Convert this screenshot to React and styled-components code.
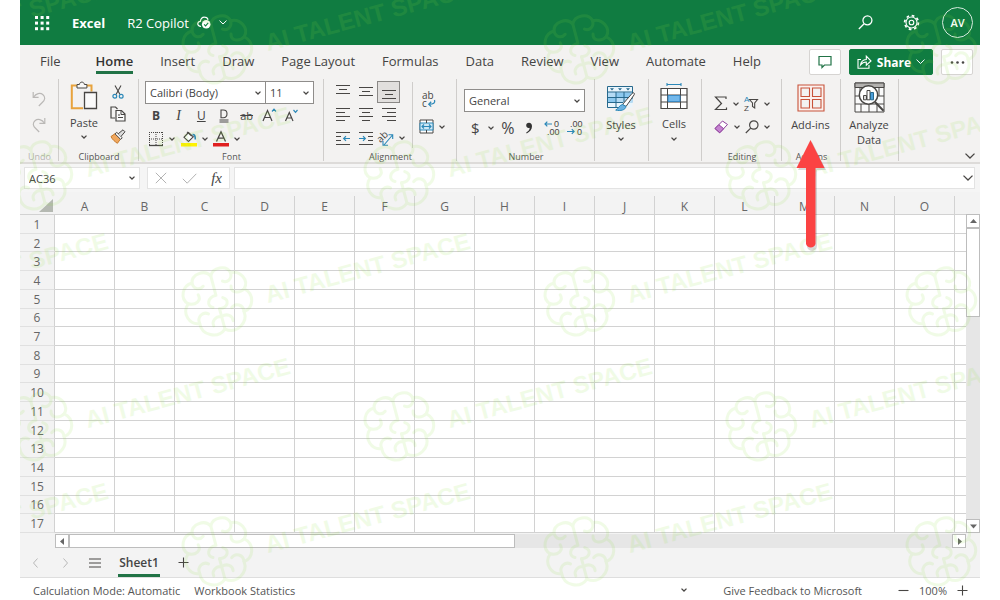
import React, { useState } from "react";
import styled, { createGlobalStyle } from "styled-components";

const GlobalStyle = createGlobalStyle`
  * {
    box-sizing: border-box;
  }

  body {
    margin: 0;
    background: #ffffff;
    font-family: "Open Sans", "Noto Sans", sans-serif;
    font-size: 11px;
    color: #444444;
  }

  button, input, select {
    font: inherit;
    color: inherit;
  }
`;

const Frame = styled.div`
  position: relative;
  height: 100vh;
  min-height: 560px;
  margin: 0 20px;
  display: flex;
  flex-direction: column;
  overflow: hidden;
  background: #f3f3f3;
`;

const PlainButton = styled.button`
  display: flex;
  align-items: center;
  justify-content: center;
  padding: 0;
  border: none;
  background: none;
  cursor: pointer;

  svg {
    flex: none;
    overflow: visible;
  }
`;

/* Title bar */

const TitleBar = styled.header`
  flex: none;
  height: 45px;
  padding: 0 7px 0 14px;
  display: flex;
  align-items: center;
  background: #107c41;
  color: #ffffff;
  font-size: 13px;
`;

const Brand = styled.span`
  margin: 0 22px;
  font-weight: 700;
`;

const FileButton = styled(PlainButton)`
  gap: 8px;
`;

const TitleActions = styled.div`
  margin-left: auto;
  display: flex;
  align-items: center;
  gap: 30px;
`;

const Avatar = styled(PlainButton)`
  width: 31px;
  height: 31px;
  margin-left: -8px;
  border: 1px solid #d5eadd;
  border-radius: 50%;
  font-size: 11px;
  font-weight: 600;
`;

/* Tabs */

const TabBar = styled.nav`
  flex: none;
  height: 31px;
  padding: 4px 7px 0 20px;
  display: flex;
  align-items: flex-start;
  background: #f3f2f1;
`;

const TabList = styled.div`
  flex: 1;
  display: flex;
  gap: 27px;
`;

const Tab = styled.button`
  height: 25px;
  padding: 3px 0 1px;
  border: none;
  border-bottom: 3px solid ${(props) => (props.$active ? "#217346" : "transparent")};
  background: none;
  font-size: 13px;
  line-height: 18px;
  font-weight: ${(props) => (props.$active ? 600 : 400)};
  color: ${(props) => (props.$active ? "#333333" : "#444444")};
  white-space: nowrap;
  cursor: pointer;

  &:first-child {
    margin-right: 8px;
  }
`;

const TabActions = styled.div`
  display: flex;
  gap: 8px;
`;

const ActionButton = styled(PlainButton)`
  width: 32px;
  height: 26px;
  border: 1px solid #d6d4d2;
  border-radius: 2px;
  background: #ffffff;
`;

const ShareButton = styled(ActionButton)`
  width: 84px;
  gap: 5px;
  border-color: #107c41;
  background: #107c41;
  color: #ffffff;
  font-size: 12px;
  font-weight: 700;
`;

/* Ribbon */

const Ribbon = styled.section`
  flex: none;
  height: 88px;
  display: flex;
  background: #f3f2f1;
  border-bottom: 2px solid #dddbd9;
`;

const Group = styled.div`
  position: relative;
  flex: none;
  width: ${(props) => props.$width}px;
  display: flex;
  flex-direction: column;

  &::after {
    content: "";
    position: absolute;
    top: 3px;
    right: 0;
    bottom: 1px;
    width: 1px;
    background: #cfcdcb;
  }
`;

const GroupBody = styled.div`
  flex: 1;
  display: flex;
  padding: ${(props) => props.$pad || "5px 8px 0"};
  gap: ${(props) => props.$gap || 0}px;
`;

const GroupLabel = styled.span`
  height: 10px;
  font-size: 9px;
  line-height: 10px;
  text-align: center;
  color: ${(props) => (props.$muted ? "#b5b3b1" : "#555555")};
`;

const Stack = styled.div`
  display: flex;
  flex-direction: column;
  align-items: ${(props) => props.$align || "center"};
  gap: ${(props) => props.$gap || 0}px;
  padding-top: ${(props) => props.$top || 0}px;
`;

const Row = styled.div`
  display: flex;
  align-items: center;
  justify-content: space-between;
  width: ${(props) => (props.$width ? `${props.$width}px` : "auto")};
  height: 23px;
  padding-left: ${(props) => props.$indent || 0}px;
`;

const BigButton = styled(PlainButton)`
  flex: 1;
  flex-direction: column;
  justify-content: flex-start;
  gap: ${(props) => props.$gap || 5}px;
  line-height: 15px;
`;

const ToolButton = styled(PlainButton)`
  min-width: ${(props) => props.$width || 22}px;
  height: 22px;
  gap: ${(props) => props.$gap || 5}px;
  border: 1px solid ${(props) => (props.$active ? "#8a8886" : "transparent")};
  background: ${(props) => (props.$active ? "#e1dfdd" : "none")};
`;

const SplitButton = styled(ToolButton)`
  justify-content: flex-start;
`;

const Letter = styled.span`
  font-size: ${(props) => props.$size || 12}px;
  line-height: 14px;
  font-weight: ${(props) => (props.$bold ? 700 : 400)};
  font-family: ${(props) => (props.$serif ? '"Liberation Serif", serif' : "inherit")};
  font-style: ${(props) => (props.$italic ? "italic" : "normal")};
  text-decoration: ${(props) => props.$line || "none"};
`;

const SelectBox = styled.label`
  position: relative;
  display: flex;
  width: ${(props) => props.$width}px;
  height: 23px;
  border: 1px solid #8f8d8b;
  background: #ffffff;

  & + & {
    margin-left: -1px;
  }

  select {
    width: 100%;
    padding: 0 16px 0 4px;
    border: none;
    outline: none;
    appearance: none;
    background: none;
  }

  svg {
    position: absolute;
    top: 9px;
    right: 4px;
    pointer-events: none;
  }
`;

const AlignGrid = styled.div`
  display: grid;
  grid-template-columns: repeat(3, 23px);
  grid-auto-rows: 23px;
`;

const InnerDivider = styled.span`
  width: 1px;
  height: 66px;
  margin: 1px 5px 0 12px;
  background: #cfcdcb;
`;

const RibbonEnd = styled.div`
  flex: 1;
  display: flex;
  align-items: flex-end;
  justify-content: flex-end;
  padding: 0 5px 3px 0;
`;

const Pointer = styled.svg`
  position: absolute;
  z-index: 3;
  top: 63px;
  left: 12px;
  pointer-events: none;
`;

/* Formula bar */

const FormulaBar = styled.div`
  flex: none;
  height: 28px;
  padding: 3px 5px 3px 4px;
  display: flex;
  gap: 7px;
  background: #f5f5f5;
`;

const FormulaPart = styled.div`
  display: flex;
  align-items: center;
  justify-content: space-between;
  width: ${(props) => (props.$width ? `${props.$width}px` : "auto")};
  flex: ${(props) => (props.$grow ? 1 : "none")};
  margin-left: ${(props) => (props.$grow ? "-3px" : 0)};
  padding: 0 ${(props) => props.$pad || 4}px;
  border: 1px solid #e3e3e3;
  background: #ffffff;

  input {
    flex: 1;
    min-width: 0;
    padding: 0;
    border: none;
    outline: none;
    background: none;
  }
`;

/* Sheet */

const SheetArea = styled.main`
  flex: 1;
  min-height: 0;
  display: grid;
  grid-template-columns: 1fr 14px;
  grid-template-rows: 1fr 15px;
  padding-top: 4px;
`;

const Sheet = styled.table`
  width: 100%;
  height: 100%;
  table-layout: fixed;
  border-collapse: separate;
  border-spacing: 0;
  color: #666666;
  font-size: 12px;
  line-height: 14px;

  th, td {
    padding: 0;
    border-right: 1px solid #d2d2d2;
    border-bottom: 1px solid #d2d2d2;
    font-weight: 400;
  }

  td {
    background: #ffffff;
  }

  th:last-child, td:last-child {
    border-right: none;
  }

  thead th {
    height: 19px;
    vertical-align: bottom;
    text-align: center;
  }

  thead th:first-child {
    border-right: none;
  }

  tbody th {
    padding-top: 2px;
    border-bottom-color: #e0e0e0;
  }
`;

const HeadCol = styled.col`
  width: 35px;
`;

const DataCol = styled.col`
  width: 60px;
`;

const Corner = styled.svg`
  display: block;
  margin: 0 2px 2px auto;
`;

const VerticalBar = styled.div`
  margin-top: 18px;
  display: flex;
  flex-direction: column;
  background: #e6e6e6;
`;

const HorizontalBar = styled.div`
  margin: 1px 0 0 35px;
  display: flex;
  background: #e6e6e6;
`;

const ScrollArrow = styled(PlainButton)`
  flex: none;
  width: 14px;
  height: 14px;
  border: 1px solid #bdbdbd;
  background: #ffffff;
`;

const Thumb = styled.span`
  flex: 0 0 ${(props) => props.$size};
  border: 1px solid #bdbdbd;
  background: #ffffff;
`;

const Track = styled.span`
  flex: 1;
`;

/* Bottom bars */

const SheetBar = styled.div`
  flex: none;
  height: 30px;
  display: flex;
  align-items: stretch;
  border-bottom: 1px solid #dedede;

  > button {
    width: 30px;
  }
`;

const SheetTab = styled(PlainButton)`
  && {
    width: 42px;
    margin: 0 8px;
  }
  padding-bottom: 1px;
  border-top: 3px solid transparent;
  border-bottom: 3px solid #217346;
  font-size: 12px;
  font-weight: 600;
`;

const StatusBar = styled.footer`
  flex: none;
  height: 22px;
  padding: 2px 12px 0 13px;
  display: flex;
  align-items: center;
  gap: 14px;
  background: #ffffff;
  color: #555555;
  white-space: nowrap;
`;

const StatusRight = styled.div`
  margin-left: auto;
  display: flex;
  align-items: center;
  gap: 36px;
`;

const Zoom = styled.div`
  display: flex;
  align-items: center;
  gap: 10px;
`;

const Watermark = styled.svg`
  position: absolute;
  inset: 0;
  width: 100%;
  height: 100%;
  pointer-events: none;
`;

const INK = "#484644";
const BLUE = "#2b88b8";

const Chevron = ({ size = 6, color = INK, width = 1.3 }) => (
  <svg width={size} height={size / 2 + 1} viewBox={`0 0 ${size} ${size / 2 + 1}`} fill="none" aria-hidden="true">
    <path d={`M.5 .6 L${size / 2} ${size / 2} L${size - 0.5} .6`} stroke={color} strokeWidth={width} />
  </svg>
);

const Icon = ({ w, h, children }) => (
  <svg width={w} height={h} viewBox={`0 0 ${w} ${h}`} fill="none" stroke={INK} strokeWidth="1" aria-hidden="true">
    {children}
  </svg>
);

const WaffleIcon = () => (
  <Icon w={16} h={16}>
    <g fill="#ffffff" stroke="none">
      {[1, 6.6, 12.2].map((y) =>
        [1, 6.6, 12.2].map((x) => <rect key={`${x}-${y}`} x={x} y={y} width="3" height="3" />)
      )}
    </g>
  </Icon>
);

const CloudIcon = () => (
  <Icon w={14} h={13}>
    <path d="M4 10.5C1.8 10.3.6 9 .8 7.4 1 6 2.2 5.2 3.3 5.3 3.8 2.6 5.4 1 7.6 1.1c1.8 0 3 1 3.5 2.6" stroke="#ffffff" strokeWidth="1.2" />
    <circle cx="9.2" cy="8.3" r="4.3" fill="#ffffff" stroke="none" />
    <path d="M7.1 8.4l1.5 1.5 2.6-3" stroke="#107c41" strokeWidth="1.1" />
  </Icon>
);

const SearchIcon = ({ size = 14, color = INK }) => (
  <svg width={size} height={size} viewBox="0 0 14 14" fill="none" stroke={color} strokeWidth="1.2" aria-hidden="true">
    <circle cx="8.8" cy="5" r="4.2" />
    <path d="M5.7 8.1L.8 13" />
  </svg>
);

const GearIcon = () => (
  <svg width="17" height="17" viewBox="0 0 17 17" fill="none" stroke="#ffffff" strokeWidth="1.1" aria-hidden="true">
    <circle cx="8.5" cy="8.5" r="5.5" />
    <circle cx="8.5" cy="8.5" r="2.3" />
    <circle cx="8.5" cy="8.5" r="6.9" strokeWidth="1.7" strokeDasharray="2.7 2.72" />
  </svg>
);

const CommentIcon = () => (
  <Icon w={14} h={14}>
    <path d="M1 1.5h12v8.5H6.5L4 12.5V10H1z" stroke="#217346" strokeWidth="1.2" />
  </Icon>
);

const ShareIcon = () => (
  <Icon w={15} h={14}>
    <g stroke="#ffffff" strokeWidth="1.1">
      <path d="M4 4.5H1v8.7h11V10" />
      <path d="M3.5 10C4 6.4 6 4.8 9.3 4.5V1.2L14 6 9.3 10.2V7C6.7 7 5 8 3.5 10z" />
    </g>
  </Icon>
);

const MoreIcon = () => (
  <Icon w={15} h={3}>
    <g fill="#484644" stroke="none">
      <circle cx="2" cy="1.5" r="1.3" />
      <circle cx="7.5" cy="1.5" r="1.3" />
      <circle cx="13" cy="1.5" r="1.3" />
    </g>
  </Icon>
);

const UndoIcon = ({ redo }) => (
  <Icon w={14} h={16}>
    <g transform={redo ? "translate(14 0) scale(-1 1)" : undefined} stroke="#bab8b6" strokeWidth="1.2">
      <path d="M1.2 1v5.4h5.4" />
      <path d="M1.5 6.2C4 2.3 8.3 1.4 11 3.7c2.7 2.4 2 5.3-.5 7.6L6.8 15" />
    </g>
  </Icon>
);

const PasteIcon = () => (
  <Icon w={28} h={29}>
    <path d="M7 4.5H1.8v22.7H13M16.5 4.5h5v6" stroke="#e8a33d" strokeWidth="2" />
    <path d="M7 7V3.500h2.400C9.800.3 14 .3 14.400 3.500h2.500V7z" fill="#f8f8f8" />
    <path d="M14.500 11.500h12v16h-12z" fill="#fafafa" strokeWidth="1.3" />
  </Icon>
);

const CutIcon = () => (
  <Icon w={12} h={14}>
    <path d="M3 .5l5 9M9 .5l-5 9" strokeWidth="1.1" />
    <circle cx="2.8" cy="11.2" r="1.9" stroke={BLUE} strokeWidth="1.2" />
    <circle cx="9.2" cy="11.2" r="1.9" stroke={BLUE} strokeWidth="1.2" />
  </Icon>
);

const CopyIcon = () => (
  <Icon w={16} h={16}>
    <path d="M5 12H1V1h4.5l2 2" strokeWidth="1.2" />
    <path d="M6 4.5h5.5L15 8v7H6z" fill="#fafafa" strokeWidth="1.2" />
    <path d="M11 4.5V8.5h4M8 9h2M8 11.5h5" />
  </Icon>
);

const PainterIcon = () => (
  <Icon w={16} h={15}>
    <path d="M1 7.5l4-2.8 5.4 5.4-3 4.2C5 12.5 2.5 11 1 7.5z" fill="#f0a75e" stroke="#c77a2b" />
    <path d="M5 4.8l1.8-1.4 5.4 5.2-1.5 1.8z" fill="#ffffff" />
    <path d="M8.2 4.8L13 .8l2 2-4 4.6" fill="#dddddd" />
  </Icon>
);

const BordersIcon = () => (
  <Icon w={16} h={16}>
    <path d="M1.5 1v14M14.5 1v14M8 1v14M1 1.5h14M1 8h14" strokeDasharray="1 1" />
    <path d="M1 14.5h14" strokeWidth="1.3" />
  </Icon>
);

const FillIcon = () => (
  <Icon w={16} h={16}>
    <path d="M7.5 1.5L3 6.3l4.5 4.2 4.8-4.7zM6 .8l4.6 4.3" fill="#ffffff" strokeWidth="1.1" />
    <path d="M11.5 3.5c2-.2 2.8 1.2 2.8 5" stroke={BLUE} strokeWidth="1.6" />
    <path d="M0 12h16v3.5H0z" fill="#fff200" stroke="none" />
  </Icon>
);

const FontColorIcon = () => (
  <Icon w={16} h={16}>
    <path d="M3.5 10.5L8 .8l4.5 9.7M5 7.2h6" strokeWidth="1.3" />
    <path d="M0 12h16v3.5H0z" fill="#e02020" stroke="none" />
  </Icon>
);

const ResizeIcon = ({ grow }) => (
  <Icon w={15} h={15}>
    {grow ? (
      <path d="M1 13L5.5 2.5 10 13M2.5 9.5h6" strokeWidth="1.2" />
    ) : (
      <path d="M1.5 13l3.8-8.500L9 13M2.800 10h5" strokeWidth="1.2" />
    )}
    <path d={grow ? "M10 3.5L12 1.2l2 2.3" : "M9.5 2l2 2.3 2-2.3"} stroke={BLUE} strokeWidth="1.2" />
  </Icon>
);

const DoubleUnderlineIcon = () => (
  <Icon w={10} h={14}>
    <path d="M2 1h2.3C7 1 8 2.8 8 4.8S7 8.7 4.3 8.7H2zM.5 11h9M.5 13h9" strokeWidth="1.1" />
  </Icon>
);

// each entry is [x start, x end] of one line
const LINE_SETS = {
  center: [[0, 14], [3, 11], [0, 14]],
  left4: [[0, 14], [0, 9], [0, 14], [0, 9]],
  center4: [[0, 14], [3, 11], [0, 14], [3, 11]],
  right4: [[0, 14], [5, 14], [0, 14], [5, 14]],
};

const LinesIcon = ({ kind, top = 0 }) => (
  <Icon w={14} h={16}>
    {LINE_SETS[kind].map(([from, to], i) => (
      <path key={i} d={`M${from} ${top + 1.5 + i * 4}H${to}`} />
    ))}
  </Icon>
);

const IndentIcon = ({ increase }) => (
  <Icon w={14} h={14}>
    <path d={increase ? "M0 1.5h14M9 5.5h5M9 9.5h5M0 13.5h14" : "M0 1.5h14M0 5.5h5M0 9.5h5M0 13.5h14"} />
    <path d={increase ? "M0 7.5h6M4 5.2l2.3 2.3L4 9.8" : "M14 7.5H8M10 5.2L7.7 7.5 10 9.8"} stroke={BLUE} strokeWidth="1.2" />
  </Icon>
);

const OrientationIcon = () => (
  <Icon w={16} h={16}>
    <text x="0" y="11" fontSize="10" fill={INK} stroke="none" transform="rotate(-45 4 9)">
      ab
    </text>
    <path d="M6 15L14.5 5M10.5 4.8h4.2V9M5 11v4.3h5" stroke={BLUE} strokeWidth="1.1" />
  </Icon>
);

const WrapIcon = () => (
  <Icon w={16} h={16}>
    <g fill={INK} stroke="none" fontSize="10">
      <text x="1" y="7">
        ab
      </text>
      <text x="1" y="15">
        c
      </text>
    </g>
    <path d="M13.5 8c1 3-1 4.2-5.5 4.2M10.2 9.8L7.8 12.2l2.4 2.4" stroke={BLUE} strokeWidth="1.3" />
  </Icon>
);

const MergeIcon = () => (
  <Icon w={15} h={15}>
    <path d="M1 1h13v13H1z" fill="#ffffff" />
    <path d="M1 4h13v7H1z" fill="#cfe8f5" stroke={BLUE} />
    <path d="M7.5 1v3M7.5 11v3" />
    <path d="M3 7.5h9M5 5.5l-2 2 2 2M10 5.5l2 2-2 2" stroke={BLUE} strokeWidth="1.1" />
  </Icon>
);

const DecimalIcon = ({ decrease }) => (
  <Icon w={16} h={16}>
    <g fill={INK} stroke="none" fontSize="9" fontFamily="Liberation Sans">
      <text x={decrease ? 3 : 10} y="7">
        {decrease ? ".00" : "0"}
      </text>
      <text x={decrease ? 10 : 3} y="15">
        {decrease ? "0" : ".00"}
      </text>
    </g>
    <path d={decrease ? "M0 11.5h7M4.8 9.2l2.3 2.3-2.3 2.3" : "M8 4H1M3.3 1.7L1 4l2.3 2.3"} stroke={BLUE} strokeWidth="1.2" />
  </Icon>
);

const StylesIcon = () => (
  <Icon w={30} h={27}>
    <path d="M1.5 1.5h25v21h-25z" fill="#eaf5fc" stroke="none" />
    <path d="M1.5 7.5h25v10h-25z" fill="#8cc8ee" stroke="none" />
    <path d="M10 12.5h17v5H10zM1.5 7.5H10v5H1.5z" fill="#b5dbf4" stroke="none" />
    <path d="M18 22.5H1.5v-21h25v12M1.5 7h25M1.5 12.5h22M1.5 17.5H17M10 7v15.5M18 7v10" stroke="#27698d" />
    <path d="M4 3.2h4L6 5.4zM12 3.2h4l-2 2.2zM20 3.2h4l-2 2.2z" fill="#27698d" stroke="none" />
    <path d="M16.5 19.5L26.2 8.3c1.3-1.2 2.8-.2 2 1.4L20 21.5z" fill="#ffffff" />
    <path d="M20 21.5c-.6 3.6-5.5 4.7-10.3 3.6 3-1 3-4.8 6.8-5.6z" fill="#6bb2e2" stroke={BLUE} />
  </Icon>
);

const CellsIcon = () => (
  <Icon w={28} h={27}>
    <path d="M7 1.5h14M7 0v3M21 0v3" stroke={BLUE} strokeWidth="1.1" />
    <path d="M1 5.5h26v20H1z" fill="#ffffff" strokeWidth="1.2" />
    <path d="M1 12h26M1 19h26M7.5 5.5v20M20.5 5.5v20" />
    <path d="M8 12.5h12v6H8z" fill="#72b8ec" stroke="#3b8ac4" />
  </Icon>
);

const SumIcon = () => (
  <Icon w={14} h={15}>
    <path d="M12 3V1H1.5l6 6.5-6 6H12.5V11.5" strokeWidth="1.2" />
  </Icon>
);

const SortIcon = () => (
  <Icon w={15} h={15}>
    <g stroke="none" fontSize="8" fontFamily="Liberation Sans">
      <text x="0" y="6" fill={BLUE}>
        A
      </text>
      <text x="0" y="15" fill={INK}>
        Z
      </text>
    </g>
    <path d="M5.5 3.5h8L10.7 7v5L8.5 10.5V7z" strokeWidth="1.1" />
  </Icon>
);

const EraserIcon = () => (
  <Icon w={15} h={14}>
    <path d="M1 8.5L8.5 1l5 3.5-7.8 8.3z" fill="#ffffff" stroke="#8e3f9c" />
    <path d="M1 8.5l3.8-3.8 4.9 4-4 4.1z" fill="#c583d0" stroke="#8e3f9c" />
  </Icon>
);

const AddinsIcon = () => (
  <Icon w={28} h={28}>
    <g stroke="#c8533a" strokeWidth="1.1">
      <path d="M1 1h26v26H1z" fill="#fbf1ee" />
      <path d="M4 4h8.500v8.500H4zM15.500 4H24v8.500h-8.500zM4 15.500h8.500V24H4zM15.500 15.500H24V24h-8.500z" fill="#f3f2f1" />
    </g>
  </Icon>
);

const AnalyzeIcon = () => (
  <Icon w={31} h={31}>
    <path d="M1 1h29v29H1z" fill="#fafafa" />
    <path d="M1 1h29v4.5H1z" fill="#b3b1af" />
    <path d="M1 14h29M1 22h29M7 22v8M15 22v8M23 22v8M6 5.5V14M25 5.5V14" />
    <circle cx="14.5" cy="13" r="9.2" fill="#ffffff" strokeWidth="1.5" />
    <path d="M21 20l8.5 8.8" strokeWidth="2" />
    <path d="M9.5 13.5h3v4.3h-3z" fill="#d9d9d9" />
    <path d="M13 8.5h3v9.3h-3z" fill="#ffffff" />
    <path d="M16.5 10.5h3v7.3h-3z" fill="#4b9edb" stroke="#27698d" />
  </Icon>
);

const CancelIcon = () => (
  <Icon w={12} h={12}>
    <path d="M.8.8l10.4 10.4M11.2.8L.8 11.2" stroke="#b3b3b3" />
  </Icon>
);

const AcceptIcon = () => (
  <Icon w={15} h={11}>
    <path d="M.8 5.8l4.4 4.4L14.3.8" stroke="#b3b3b3" />
  </Icon>
);

const AngleIcon = ({ flip }) => (
  <Icon w={7} h={12}>
    <path d={flip ? "M1.5 1.5L5.5 6l-4 4.5" : "M5.5 1.5L1.5 6l4 4.5"} stroke="#b8b8b8" />
  </Icon>
);

const MenuIcon = () => (
  <Icon w={12} h={10}>
    <path d="M0 1h12M0 5h12M0 9h12" strokeWidth="1.2" />
  </Icon>
);

const PlusIcon = ({ minus }) => (
  <Icon w={11} h={11}>
    <path d={minus ? "M.5 5.5h10" : "M.5 5.5h10M5.5.5v10"} strokeWidth="1.1" />
  </Icon>
);

const TRIANGLES = {
  up: "M0 5l3.5-4L7 5z",
  down: "M0 1.5l3.5 4 3.5-4z",
  left: "M5 0L1 3.5 5 7z",
  right: "M2 0l4 3.5L2 7z",
};

const Triangle = ({ dir }) => (
  <svg width="7" height="7" viewBox="0 0 7 7" fill="#666666" aria-hidden="true">
    <path d={TRIANGLES[dir]} />
  </svg>
);

const SplitTool = ({ label, gap, children }) => (
  <SplitButton aria-label={label} $gap={gap}>
    {children}
    <Chevron />
  </SplitButton>
);

const TABS = [
  "File", "Home", "Insert", "Draw", "Page Layout", "Formulas",
  "Data", "Review", "View", "Automate", "Help",
];

const COLUMNS = "ABCDEFGHIJKLMNO".split("");
const ROWS = Array.from({ length: 17 }, (_, i) => i + 1);

const MARK_ROWS = [51, 177, 303, 428, 553, 679];

const Mark = ({ x, y }) => (
  <g transform={`translate(${x} ${y}) rotate(-15)`}>
    <g fill="none" stroke="#8de03c" strokeWidth="3" strokeLinecap="round">
      <path d="M0-28C-4-36-18-35-20-26-30-26-36-14-29-7-38 1-33 14-23 15-24 27-10 35 0 27 10 35 24 27 23 15 33 14 38 1 29-7 36-14 30-26 20-26 18-35 4-36 0-28z" />
      <path d="M0-28V-8M0 6V27M-20-26C-20-19-14-17-10-20M-29-7C-22-3-15-7-17-13M-23 15C-24 8-17 4-12 8M0-8C-9-8-12 0-6 3M0 14C-6 12-11 16-10 21" />
      <path d="M20-26C20-19 14-17 10-20M29-7C22-3 15-7 17-13M23 15C24 8 17 4 12 8M0 6C9 7 12 0 6-4M0 14C6 12 11 16 10 21" />
    </g>
    <text x="48" y="13" fontSize="24" fontWeight="700" fontFamily="Liberation Sans, sans-serif" fill="#8de03c">
      AI TALENT SPACE
    </text>
  </g>
);

const App = () => {
  const [activeTab, setActiveTab] = useState("Home");
  const [formula, setFormula] = useState("");
  const [cellName, setCellName] = useState("AC36");

  return (
    <Frame>
      <GlobalStyle />

      <TitleBar>
        <PlainButton aria-label="App launcher">
          <WaffleIcon />
        </PlainButton>
        <Brand>Excel</Brand>
        <FileButton>
          R2 Copilot
          <CloudIcon />
          <Chevron size={8} color="#ffffff" width={1} />
        </FileButton>
        <TitleActions>
          <PlainButton aria-label="Search">
            <SearchIcon size={15} color="#ffffff" />
          </PlainButton>
          <PlainButton aria-label="Settings">
            <GearIcon />
          </PlainButton>
          <Avatar>AV</Avatar>
        </TitleActions>
      </TitleBar>

      <TabBar>
        <TabList>
          {TABS.map((tab) => (
            <Tab key={tab} $active={tab === activeTab} onClick={() => setActiveTab(tab)}>
              {tab}
            </Tab>
          ))}
        </TabList>
        <TabActions>
          <ActionButton aria-label="Comments">
            <CommentIcon />
          </ActionButton>
          <ShareButton>
            <ShareIcon />
            Share
            <Chevron size={9} color="#ffffff" width={1} />
          </ShareButton>
          <ActionButton aria-label="More options">
            <MoreIcon />
          </ActionButton>
        </TabActions>
      </TabBar>

      <Ribbon>
        <Group $width={39}>
          <GroupBody $pad="12px 8px 0">
            <Stack $gap={4}>
              <ToolButton aria-label="Undo">
                <UndoIcon />
              </ToolButton>
              <ToolButton aria-label="Redo">
                <UndoIcon redo />
              </ToolButton>
            </Stack>
          </GroupBody>
          <GroupLabel $muted>Undo</GroupLabel>
        </Group>

        <Group $width={80}>
          <GroupBody $pad="5px 10px 0 8px" $gap={6}>
            <BigButton>
              <PasteIcon />
              Paste
              <Chevron />
            </BigButton>
            <Stack>
              <ToolButton aria-label="Cut">
                <CutIcon />
              </ToolButton>
              <ToolButton aria-label="Copy">
                <CopyIcon />
              </ToolButton>
              <ToolButton aria-label="Format Painter">
                <PainterIcon />
              </ToolButton>
            </Stack>
          </GroupBody>
          <GroupLabel>Clipboard</GroupLabel>
        </Group>

        <Group $width={185}>
          <GroupBody $pad="5px 6px 0">
            <Stack $align="flex-start">
              <Row>
                <SelectBox $width={121}>
                  <select aria-label="Font name">
                    <option>Calibri (Body)</option>
                  </select>
                  <Chevron />
                </SelectBox>
                <SelectBox $width={49}>
                  <select aria-label="Font size">
                    <option>11</option>
                  </select>
                  <Chevron />
                </SelectBox>
              </Row>
              <Row $width={158}>
                <ToolButton aria-label="Bold">
                  <Letter $bold>B</Letter>
                </ToolButton>
                <ToolButton aria-label="Italic">
                  <Letter $serif $italic $size={14}>I</Letter>
                </ToolButton>
                <ToolButton aria-label="Underline">
                  <Letter $line="underline">U</Letter>
                </ToolButton>
                <ToolButton aria-label="Double underline">
                  <DoubleUnderlineIcon />
                </ToolButton>
                <ToolButton aria-label="Strikethrough">
                  <Letter $size={11} $line="line-through">ab</Letter>
                </ToolButton>
                <ToolButton aria-label="Increase font size">
                  <ResizeIcon grow />
                </ToolButton>
                <ToolButton aria-label="Decrease font size">
                  <ResizeIcon />
                </ToolButton>
              </Row>
              <Row $width={96} $indent={2}>
                <SplitTool label="Borders">
                  <BordersIcon />
                </SplitTool>
                <SplitTool label="Fill color">
                  <FillIcon />
                </SplitTool>
                <SplitTool label="Font color">
                  <FontColorIcon />
                </SplitTool>
              </Row>
            </Stack>
          </GroupBody>
          <GroupLabel>Font</GroupLabel>
        </Group>

        <Group $width={133}>
          <GroupBody $pad="5px 0 0 7px">
            <AlignGrid>
              <ToolButton aria-label="Top align">
                <LinesIcon kind="center" />
              </ToolButton>
              <ToolButton aria-label="Middle align">
                <LinesIcon kind="center" top={2} />
              </ToolButton>
              <ToolButton aria-label="Bottom align" $active>
                <LinesIcon kind="center" top={5} />
              </ToolButton>
              <ToolButton aria-label="Align left">
                <LinesIcon kind="left4" />
              </ToolButton>
              <ToolButton aria-label="Center">
                <LinesIcon kind="center4" />
              </ToolButton>
              <ToolButton aria-label="Align right">
                <LinesIcon kind="right4" />
              </ToolButton>
              <ToolButton aria-label="Decrease indent">
                <IndentIcon />
              </ToolButton>
              <ToolButton aria-label="Increase indent">
                <IndentIcon increase />
              </ToolButton>
              <SplitTool label="Orientation">
                <OrientationIcon />
              </SplitTool>
            </AlignGrid>
            <InnerDivider />
            <Stack $top={7} $gap={4} $align="flex-start">
              <Row>
                <ToolButton aria-label="Wrap text">
                  <WrapIcon />
                </ToolButton>
              </Row>
              <Row>
                <SplitTool label="Merge cells">
                  <MergeIcon />
                </SplitTool>
              </Row>
            </Stack>
          </GroupBody>
          <GroupLabel>Alignment</GroupLabel>
        </Group>

        <Group $width={138}>
          <GroupBody $pad="13px 7px 0">
            <Stack $gap={4} $align="flex-start">
              <SelectBox $width={121}>
                <select aria-label="Number format">
                  <option>General</option>
                </select>
                <Chevron />
              </SelectBox>
              <Row $width={120} $indent={6}>
                <SplitTool label="Currency" gap={8}>
                  <Letter $size={15}>$</Letter>
                </SplitTool>
                <ToolButton aria-label="Percent" $width={16}>
                  <Letter $size={16}>%</Letter>
                </ToolButton>
                <ToolButton aria-label="Comma style" $width={16}>
                  <Icon w={8} h={12}>
                    <path d="M4 .8a2.8 2.8 0 0 0-2.8 2.8C1.2 5.2 2.4 6 3.6 6c.6 0 .9-.1 1.1-.2C4.6 7.8 3.4 9.5 1.2 10.6l.5.8C4.9 10 7 7.5 7 4.3 7 2 5.8.8 4 .8z" fill="#333333" stroke="none" />
                  </Icon>
                </ToolButton>
                <ToolButton aria-label="Increase decimal" $width={18}>
                  <DecimalIcon />
                </ToolButton>
                <ToolButton aria-label="Decrease decimal" $width={18}>
                  <DecimalIcon decrease />
                </ToolButton>
              </Row>
            </Stack>
          </GroupBody>
          <GroupLabel>Number</GroupLabel>
        </Group>

        <Group $width={54}>
          <GroupBody $pad="9px 5px 0 3px">
            <BigButton>
              <StylesIcon />
              Styles
              <Chevron />
            </BigButton>
          </GroupBody>
        </Group>

        <Group $width={53}>
          <GroupBody $pad="7px 6px 0 3px">
            <BigButton $gap={6}>
              <CellsIcon />
              Cells
              <Chevron />
            </BigButton>
          </GroupBody>
        </Group>

        <Group $width={80}>
          <GroupBody $pad="16px 8px 0 11px">
            <Stack $align="flex-start">
              <Row $width={58}>
                <SplitTool label="AutoSum">
                  <SumIcon />
                </SplitTool>
                <SplitTool label="Sort and filter">
                  <SortIcon />
                </SplitTool>
              </Row>
              <Row $width={58}>
                <SplitTool label="Clear">
                  <EraserIcon />
                </SplitTool>
                <SplitTool label="Find">
                  <SearchIcon />
                </SplitTool>
              </Row>
            </Stack>
          </GroupBody>
          <GroupLabel>Editing</GroupLabel>
        </Group>

        <Group $width={59}>
          <GroupBody $pad="8px 5px 0 3px">
            <BigButton>
              <AddinsIcon />
              Add-ins
            </BigButton>
          </GroupBody>
          <GroupLabel>Add-ins</GroupLabel>
          <Pointer width="34" height="116" viewBox="0 0 34 116" aria-hidden="true">
            <path d="M18 3l14 28h-9v76a5 5 0 0 1-10 0V31H4z" fill="#000000" opacity="0.15" />
            <path d="M16.5 1l14 28h-9v76a5 5 0 0 1-9.5 0V29H2.5z" fill="#fb4343" />
          </Pointer>
        </Group>

        <Group $width={58}>
          <GroupBody $pad="6px 5px 0 3px">
            <BigButton $gap={4}>
              <AnalyzeIcon />
              <span>
                Analyze
                <br />
                Data
              </span>
            </BigButton>
          </GroupBody>
        </Group>

        <RibbonEnd>
          <PlainButton aria-label="Collapse ribbon">
            <Chevron size={10} />
          </PlainButton>
        </RibbonEnd>
      </Ribbon>

      <FormulaBar>
        <FormulaPart $width={116}>
          <input aria-label="Name box" value={cellName} onChange={(e) => setCellName(e.target.value)} />
          <Chevron />
        </FormulaPart>
        <FormulaPart $width={83} $pad={7}>
          <PlainButton aria-label="Cancel">
            <CancelIcon />
          </PlainButton>
          <PlainButton aria-label="Enter">
            <AcceptIcon />
          </PlainButton>
          <PlainButton aria-label="Insert function">
            <Letter $serif $italic $size={15}>fx</Letter>
          </PlainButton>
        </FormulaPart>
        <FormulaPart $grow $pad={1}>
          <input aria-label="Formula" value={formula} onChange={(e) => setFormula(e.target.value)} />
          <PlainButton aria-label="Expand formula bar">
            <Chevron size={10} />
          </PlainButton>
        </FormulaPart>
      </FormulaBar>

      <SheetArea>
        <Sheet>
          <colgroup>
            <HeadCol />
            {COLUMNS.map((name) => (
              <DataCol key={name} />
            ))}
            <col />
          </colgroup>
          <thead>
            <tr>
              <th aria-label="Select all">
                <Corner width="14" height="13" viewBox="0 0 14 13">
                  <path d="M14 0v13H0z" fill="#b5b9b2" />
                </Corner>
              </th>
              {COLUMNS.map((name) => (
                <th key={name} scope="col">
                  {name}
                </th>
              ))}
              <th />
            </tr>
          </thead>
          <tbody>
            {ROWS.map((row) => (
              <tr key={row}>
                <th scope="row">{row}</th>
                {COLUMNS.map((name) => (
                  <td key={name} />
                ))}
                <td />
              </tr>
            ))}
          </tbody>
        </Sheet>
        <VerticalBar>
          <ScrollArrow aria-label="Scroll up">
            <Triangle dir="up" />
          </ScrollArrow>
          <Thumb $size="28%" />
          <Track />
          <ScrollArrow aria-label="Scroll down">
            <Triangle dir="down" />
          </ScrollArrow>
        </VerticalBar>
        <HorizontalBar>
          <ScrollArrow aria-label="Scroll left">
            <Triangle dir="left" />
          </ScrollArrow>
          <Thumb $size="49%" />
          <Track />
          <ScrollArrow aria-label="Scroll right">
            <Triangle dir="right" />
          </ScrollArrow>
        </HorizontalBar>
      </SheetArea>

      <SheetBar>
        <PlainButton aria-label="Previous sheet">
          <AngleIcon />
        </PlainButton>
        <PlainButton aria-label="Next sheet">
          <AngleIcon flip />
        </PlainButton>
        <PlainButton aria-label="All sheets">
          <MenuIcon />
        </PlainButton>
        <SheetTab>Sheet1</SheetTab>
        <PlainButton aria-label="New sheet">
          <PlusIcon />
        </PlainButton>
      </SheetBar>

      <StatusBar>
        <span>Calculation Mode: Automatic</span>
        <span>Workbook Statistics</span>
        <StatusRight>
          <Chevron />
          <span>Give Feedback to Microsoft</span>
          <Zoom>
            <PlainButton aria-label="Zoom out">
              <PlusIcon minus />
            </PlainButton>
            100%
            <PlainButton aria-label="Zoom in">
              <PlusIcon />
            </PlainButton>
          </Zoom>
        </StatusRight>
      </StatusBar>

      <Watermark opacity="0.12" aria-hidden="true">
        {MARK_ROWS.map((y, row) =>
          [0, 1, 2, 3].map((col) => (
            <Mark key={`${row}-${col}`} x={(row % 2 ? -344 : -164) + col * 362} y={y} />
          ))
        )}
      </Watermark>
    </Frame>
  );
};

export default App;
